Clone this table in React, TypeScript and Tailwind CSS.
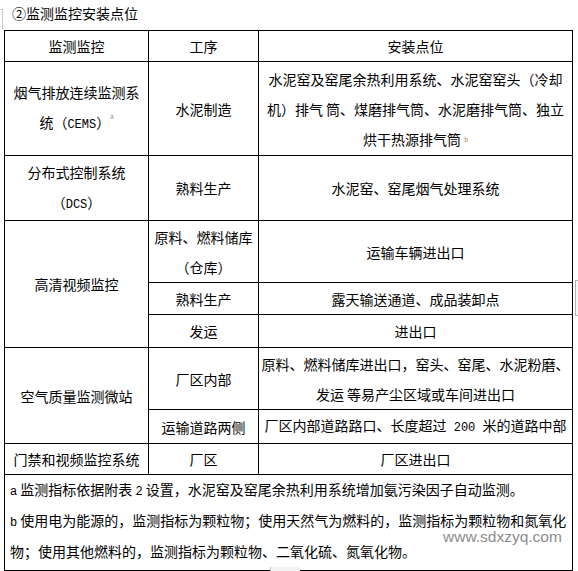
import React from "react"

const td = "border border-black text-center align-middle p-0"

function Latin({ children }: { children: React.ReactNode }) {
  return <span className="font-['Liberation_Mono',monospace] text-[12px]">{children}</span>
}

export default function App() {
  return (
    <div className="relative w-[578px] h-[571px] bg-white text-black font-['Noto_Sans_CJK_SC',sans-serif] text-[14px]">
      {/* little marker on the left edge */}
      <div className="absolute left-0 top-[9px] w-[3px] h-[20px] border-t border-r border-[#c8c8c8]" />

      <div className="h-[30px] pl-[12px] leading-[26px]">②监测监控安装点位</div>

      <div className="pl-[4px]">
        <table className="w-[569px] table-fixed border-collapse leading-[30px]">
          <colgroup>
            <col className="w-[144px]" />
            <col className="w-[110px]" />
            <col />
          </colgroup>
          <tbody>
            <tr className="h-[31px]">
              <td className={td}>监测监控</td>
              <td className={td}>工序</td>
              <td className={td}>安装点位</td>
            </tr>
            <tr className="h-[94px]">
              <td className={td}>
                烟气排放连续监测系
                <br />
                统（<Latin>CEMS</Latin>）
                <sup className="text-[6px] text-[#888] align-super">a</sup>
              </td>
              <td className={td}>水泥制造</td>
              <td className={td}>
                水泥窑及窑尾余热利用系统、水泥窑窑头（冷却
                <br />
                机）排气 筒、煤磨排气筒、水泥磨排气筒、独立
                <br />
                烘干热源排气筒 <sup className="text-[6px] text-[#b06a3a]">b</sup>
              </td>
            </tr>
            <tr className="h-[65px]">
              <td className={td}>
                分布式控制系统
                <br />
                （<Latin>DCS</Latin>）
              </td>
              <td className={td}>熟料生产</td>
              <td className={td}>水泥窑、窑尾烟气处理系统</td>
            </tr>
            <tr className="h-[62px]">
              <td className={td} rowSpan={3}>
                高清视频监控
              </td>
              <td className={td}>
                原料、燃料储库
                <br />
                （仓库）
              </td>
              <td className={td}>运输车辆进出口</td>
            </tr>
            <tr className="h-[32px]">
              <td className={td}>熟料生产</td>
              <td className={td}>露天输送通道、成品装卸点</td>
            </tr>
            <tr className="h-[33px]">
              <td className={td}>发运</td>
              <td className={td}>进出口</td>
            </tr>
            <tr className="h-[62px]">
              <td className={td} rowSpan={2}>
                空气质量监测微站
              </td>
              <td className={td}>厂区内部</td>
              <td className={td}>
                原料、燃料储库进出口，窑头、窑尾、水泥粉磨、
                <br />
                发运 等易产尘区域或车间进出口
              </td>
            </tr>
            <tr className="h-[31px]">
              <td className={td}>运输道路两侧</td>
              <td className={td}>
                厂区内部道路路口、长度超过<Latin> 200 </Latin>米的道路中部
              </td>
            </tr>
            <tr className="h-[31px]">
              <td className={td}>门禁和视频监控系统</td>
              <td className={td}>厂区</td>
              <td className={td}>厂区进出口</td>
            </tr>
          </tbody>
        </table>

        <div className="w-[569px] h-[96px] border-x border-b border-black pl-[5px] leading-[28px]">
          <p>
            <Latin>a</Latin> 监测指标依据附表 <Latin>2</Latin> 设置，水泥窑及窑尾余热利用系统增加氨污染因子自动监测。
          </p>
          <p>
            <Latin>b</Latin> 使用电为能源的，监测指标为颗粒物；使用天然气为燃料的，监测指标为颗粒物和氮氧化
          </p>
          <p>物；使用其他燃料的，监测指标为颗粒物、二氧化硫、氮氧化物。</p>
        </div>
      </div>

      {/* watermark */}
      <div className="absolute left-[443px] top-[529px] font-['Liberation_Sans',Arial,sans-serif] text-[15.5px] leading-none text-[#8c8c8c]">
        www.sdxzyq.com
      </div>

      {/* scroll artifacts at the edges */}
      <div className="absolute left-[575px] top-[280px] w-[3px] h-[36px] border-y border-l border-[#b4b4b4] bg-[#f6f6f6]" />
      <div className="absolute left-[270px] top-[567px] w-[30px] h-[4px] border-l border-[#c0c0c0] bg-[#f4f4f4]" />
    </div>
  )
}
